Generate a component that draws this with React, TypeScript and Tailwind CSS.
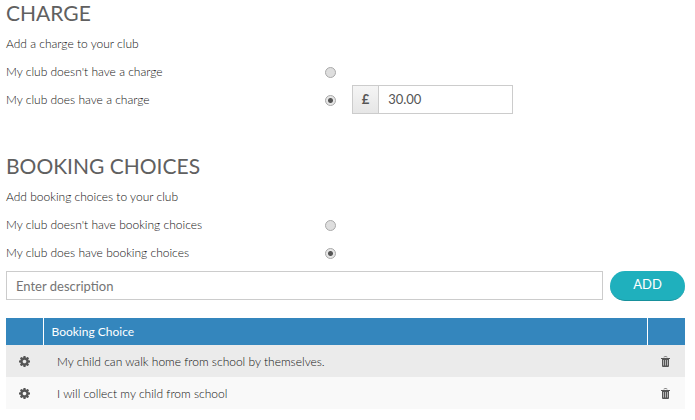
import { useState } from 'react';

interface ChoiceRadioProps {
    id: string;
    name: string;
    label: string;
    checked: boolean;
    onSelect: () => void;
    children?: React.ReactNode;
}

const initialChoices = [
    'My child can walk home from school by themselves.',
    'I will collect my child from school',
];

export default function App() {
    const [hasCharge, setHasCharge] = useState(true);
    const [hasChoices, setHasChoices] = useState(true);
    const [amount, setAmount] = useState('30.00');
    const [description, setDescription] = useState('');
    const [choices, setChoices] = useState(initialChoices);

    const addChoice = () => {
        if (!description.trim()) return;
        setChoices([...choices, description.trim()]);
        setDescription('');
    };

    return (
        <main className="bg-white pl-1.5 pr-2.5 pb-3 font-['Lato',sans-serif] text-[12px] font-light text-[#111]">
            {/* Charge */}
            <section>
                <SectionTitle>CHARGE</SectionTitle>
                <p className="h-7 leading-7">Add a charge to your club</p>
                <ChoiceRadio id="charge-no" name="charge" label="My club doesn't have a charge" checked={!hasCharge} onSelect={() => setHasCharge(false)} />
                <ChoiceRadio id="charge-yes" name="charge" label="My club does have a charge" checked={hasCharge} onSelect={() => setHasCharge(true)}>
                    <div className="-mt-px ml-4 flex h-[29px] w-[161px] border border-[#ccc]">
                        <span className="flex w-[26px] shrink-0 items-center justify-center border-r border-[#ccc] bg-linear-to-b from-[#f5f5f5] to-[#e6e6e6] text-[13px] font-bold text-[#555]">£</span>
                        <input
                            type="text"
                            aria-label="Charge amount"
                            value={amount}
                            onChange={e => setAmount(e.target.value)}
                            className="w-full min-w-0 bg-white px-[9px] text-[13px] font-normal text-[#555] focus:outline-none"
                        />
                    </div>
                </ChoiceRadio>
            </section>

            {/* Booking choices */}
            <section className="mt-[39px]">
                <SectionTitle>BOOKING CHOICES</SectionTitle>
                <p className="h-7 leading-7">Add booking choices to your club</p>
                <ChoiceRadio id="choices-no" name="choices" label="My club doesn't have booking choices" checked={!hasChoices} onSelect={() => setHasChoices(false)} />
                <ChoiceRadio id="choices-yes" name="choices" label="My club does have booking choices" checked={hasChoices} onSelect={() => setHasChoices(true)} />

                <div className="mt-1 flex items-start gap-[7px]">
                    <input
                        type="text"
                        aria-label="Booking choice description"
                        placeholder="Enter description"
                        value={description}
                        onChange={e => setDescription(e.target.value)}
                        className="h-[29px] min-w-0 flex-1 border border-[#ccc] bg-white px-[9px] text-[13px] font-normal text-[#555] placeholder:text-[#757575] focus:outline-none"
                    />
                    <button
                        type="button"
                        onClick={addChoice}
                        className="h-[30px] w-[75px] rounded-full border-b border-[#17909b] bg-[#1fb0bd] pb-0.5 text-[13px] font-normal text-white hover:bg-[#1aa1ad]"
                    >
                        ADD
                    </button>
                </div>

                <table className="mt-[17px] w-full table-fixed border-collapse text-left">
                    <thead>
                        <tr className="h-[27px] bg-[#3486bd] text-white">
                            <th className="w-[37px]" aria-label="Settings" />
                            <th className="border-x border-white px-2 font-normal">Booking Choice</th>
                            <th className="w-[38px]" aria-label="Delete" />
                        </tr>
                    </thead>
                    <tbody>
                        {choices.map((choice, i) => (
                            <tr key={i} className="h-8 odd:bg-[#ebebeb] even:bg-[#f9f9f9]">
                                <td className="pt-px pr-px">
                                    <button type="button" aria-label="Edit choice" className="mx-auto block">
                                        <CogIcon />
                                    </button>
                                </td>
                                <td className="pt-px pl-[14px]">{choice}</td>
                                <td className="pt-px pr-px">
                                    <button type="button" aria-label="Delete choice" onClick={() => setChoices(choices.filter((_, n) => n !== i))} className="mx-auto block">
                                        <TrashIcon />
                                    </button>
                                </td>
                            </tr>
                        ))}
                    </tbody>
                </table>
            </section>
        </main>
    );
}

function SectionTitle({ children }: { children: React.ReactNode }) {
    return <h2 className="mb-1 h-[26px] text-[21px] leading-[26px] font-normal text-[#606060]">{children}</h2>;
}

function ChoiceRadio({ id, name, label, checked, onSelect, children }: ChoiceRadioProps) {
    return (
        <div className="flex h-7 items-center">
            <label htmlFor={id} className="w-[47%]">{label}</label>
            <input
                id={id}
                type="radio"
                name={name}
                checked={checked}
                onChange={onSelect}
                className="h-[11px] w-[11px] shrink-0 appearance-none rounded-full border border-[#aaa] bg-[#dedede] checked:bg-[radial-gradient(circle,#555_2px,#e6e6e6_3px)]"
            />
            {children}
        </div>
    );
}

function CogIcon() {
    return (
        <svg width="11" height="11" viewBox="0 0 1536 1536" fill="#555" aria-hidden="true">
            <path d="M1024 768q0-106-75-181t-181-75-181 75-75 181 75 181 181 75 181-75 75-181zm512-109v222q0 12-8 23t-20 13l-185 28q-19 54-39 91 35 50 107 138 10 12 10 25t-9 23q-27 37-99 108t-94 71q-12 0-26-9l-138-108q-44 23-91 38-16 136-29 186-7 28-36 28H657q-14 0-24.500-8.500T621 1506l-28-184q-49-16-90-37l-141 107q-10 9-25 9-14 0-25-11-126-114-165-168-7-10-7-23 0-12 8-23 15-21 51-66.500t54-70.500q-27-50-41-99L29 913q-13-2-21-12.500T0 877V655q0-12 8-23t19-13l186-28q14-46 39-92-40-57-107-138-10-12-10-24 0-10 9-23 26-36 98.500-107.500T337 135q13 0 26 10l138 107q44-23 91-38 16-136 29-186 7-28 36-28h222q14 0 24.500 8.500T915 30l28 184q49 16 90 37l142-107q9-9 24-9 13 0 25 10 129 119 165 170 7 8 7 22 0 12-8 23-15 21-51 66.500t-54 70.500q26 50 41 98l183 28q13 2 21 12.500t8 23.500z" />
        </svg>
    );
}

function TrashIcon() {
    return (
        <svg width="9" height="11" viewBox="0 0 9 11" aria-hidden="true">
            <path d="M3 1.500V1Q3 .5 3.500 .5h2Q6 .5 6 1v.5" fill="none" stroke="#888" />
            <path d="M0 2h9v1H0z" fill="#555" />
            <path d="M1 3h7v7q0 1-1 1H2q-1 0-1-1z" fill="#555" />
            <path d="M2 4h1v5.500H2zM4 4h1v5.500H4zM6 4h1v5.500H6z" fill="#b5b5b5" />
        </svg>
    );
}
